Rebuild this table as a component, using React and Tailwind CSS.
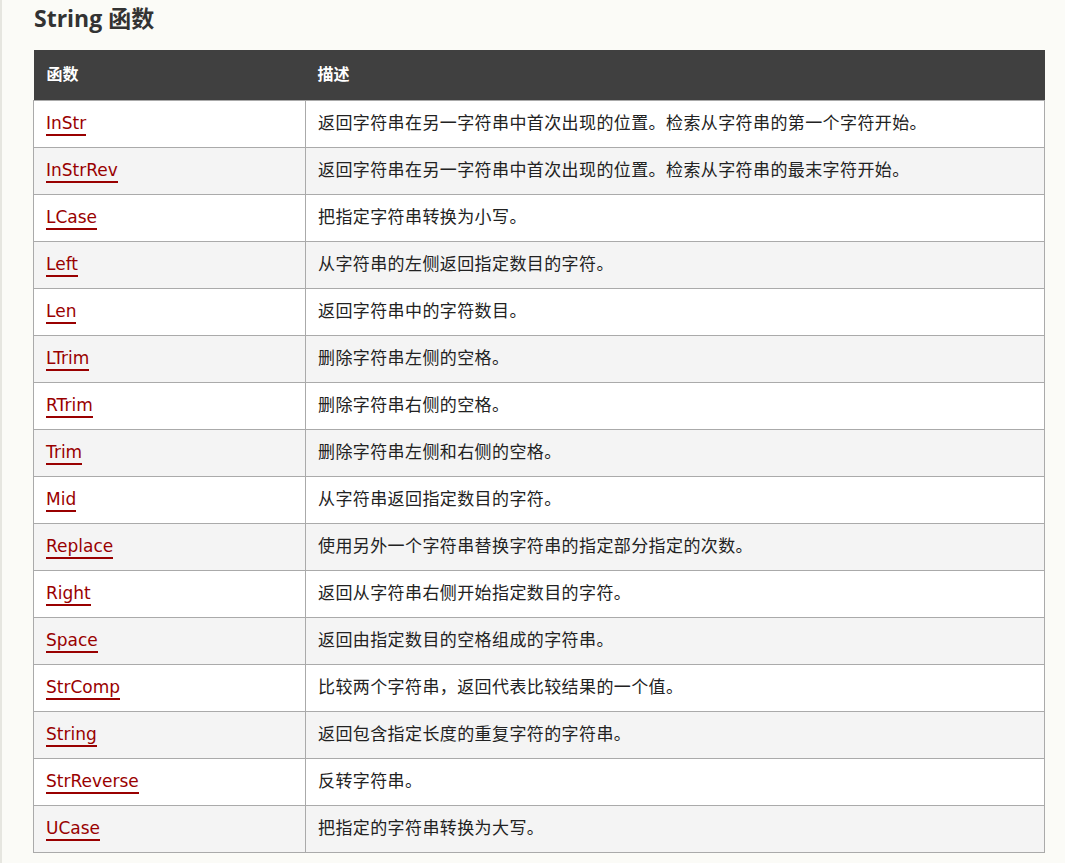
import React from "react";

const ROWS = [
  ["InStr", "返回字符串在另一字符串中首次出现的位置。检索从字符串的第一个字符开始。"],
  ["InStrRev", "返回字符串在另一字符串中首次出现的位置。检索从字符串的最末字符开始。"],
  ["LCase", "把指定字符串转换为小写。"],
  ["Left", "从字符串的左侧返回指定数目的字符。"],
  ["Len", "返回字符串中的字符数目。"],
  ["LTrim", "删除字符串左侧的空格。"],
  ["RTrim", "删除字符串右侧的空格。"],
  ["Trim", "删除字符串左侧和右侧的空格。"],
  ["Mid", "从字符串返回指定数目的字符。"],
  ["Replace", "使用另外一个字符串替换字符串的指定部分指定的次数。"],
  ["Right", "返回从字符串右侧开始指定数目的字符。"],
  ["Space", "返回由指定数目的空格组成的字符串。"],
  ["StrComp", "比较两个字符串，返回代表比较结果的一个值。"],
  ["String", "返回包含指定长度的重复字符的字符串。"],
  ["StrReverse", "反转字符串。"],
  ["UCase", "把指定的字符串转换为大写。"],
];

function App() {
  return (
    <div
      className="min-h-[863px] bg-[#fbfbf7] border-l-2 border-[#e6e6e0] pl-[31px] pr-[19px] text-[#222]"
      style={{ fontFamily: '"DejaVu Sans", "Noto Sans CJK SC", sans-serif' }}
    >
      <h2
        className="pt-[3px] h-[50px] text-[23px] font-bold text-[#333] leading-[30px] pl-[1px]"
        style={{ fontFamily: '"Open Sans", "Noto Sans CJK SC", sans-serif' }}
      >
        String 函数
      </h2>
      <table className="w-[1012px] border-collapse text-[17px]">
        <thead>
          <tr className="h-[50px] bg-[#404040] text-white text-left">
            <th className="w-[272px] pl-[13px] font-bold text-[16px]">函数</th>
            <th className="pl-[12px] font-bold text-[16px]">描述</th>
          </tr>
        </thead>
        <tbody>
          {ROWS.map(([name, desc], i) => (
            <tr
              key={name}
              className={`h-[47px] ${i % 2 === 0 ? "bg-white" : "bg-[#f4f4f4]"}`}
            >
              <td className="border border-[#aaa] pl-[12px] pt-[1px]">
                <a
                  href="#"
                  className="text-[#900] border-b-2 border-[#900] pb-[1px]"
                >
                  {name}
                </a>
              </td>
              <td className="border border-[#aaa] pl-[12px] pt-[1px] tracking-[0.4px]">
                {desc}
              </td>
            </tr>
          ))}
        </tbody>
      </table>
    </div>
  );
}

export default App;
